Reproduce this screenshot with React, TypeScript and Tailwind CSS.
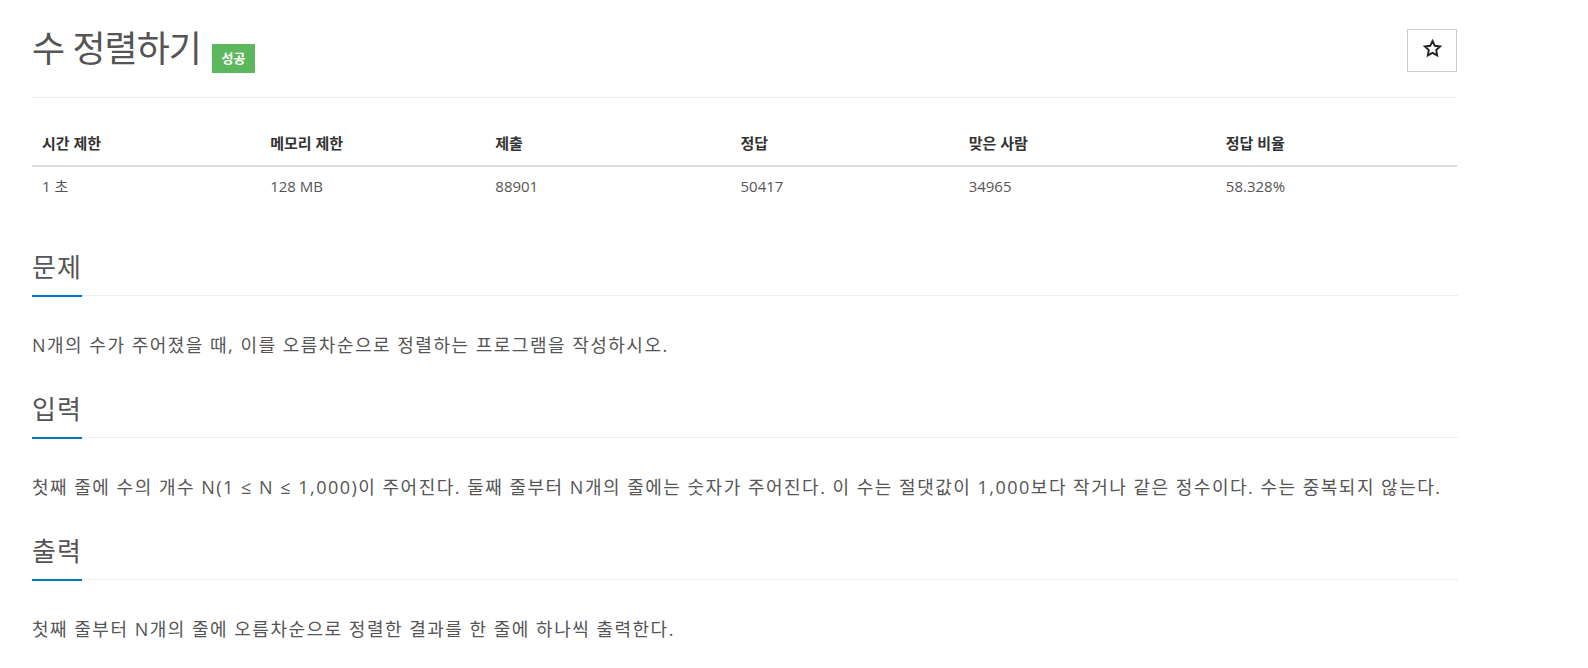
const font = { fontFamily: '"Open Sans", "Noto Sans CJK KR", sans-serif' };

const stats = [
  { label: '시간 제한', value: '1 초', w: 'w-[228px]' },
  { label: '메모리 제한', value: '128 MB', w: 'w-[225px]' },
  { label: '제출', value: '88901', w: 'w-[245px]' },
  { label: '정답', value: '50417', w: 'w-[228px]' },
  { label: '맞은 사람', value: '34965', w: 'w-[257px]' },
  { label: '정답 비율', value: '58.328%', w: 'w-[241px]' },
];

const sections = [
  { title: '문제', body: 'N개의 수가 주어졌을 때, 이를 오름차순으로 정렬하는 프로그램을 작성하시오.' },
  {
    title: '입력',
    body: '첫째 줄에 수의 개수 N(1 ≤ N ≤ 1,000)이 주어진다. 둘째 줄부터 N개의 줄에는 숫자가 주어진다. 이 수는 절댓값이 1,000보다 작거나 같은 정수이다. 수는 중복되지 않는다.',
  },
  { title: '출력', body: '첫째 줄부터 N개의 줄에 오름차순으로 정렬한 결과를 한 줄에 하나씩 출력한다.' },
];

const Section = ({ title, body }: { title: string; body: string }) => (
  <section className="mb-[32px]">
    <div className="flex items-end">
      <h2 className="text-[26px] leading-[36px] tracking-[1px] text-[#555] pb-[10px] border-b-2 border-[#0076c0] whitespace-nowrap">
        {title}
      </h2>
      <div className="flex-1 border-b border-dotted border-[#dcdcdc] mb-[1px]" />
    </div>
    <p className="mt-[34px] text-[18px] leading-[28px] tracking-[1.5px] text-[#555]">{body}</p>
  </section>
);

const StarIcon = () => (
  <svg width="19" height="19" viewBox="0 0 24 24" className="mb-[4px]">
    <polygon
      points="12,2.5 14.9,8.6 21.5,9.5 16.7,14.1 17.9,20.7 12,17.5 6.1,20.7 7.3,14.1 2.5,9.5 9.1,8.6"
      fill="none"
      stroke="#222"
      strokeWidth="2.4"
      strokeLinejoin="miter"
    />
  </svg>
);

export default function App() {
  return (
    <div className="bg-white min-h-[668px] pl-[32px]" style={font}>
      <div className="w-[1425px]">
        <div className="flex justify-between pt-[27px] pb-[24px] border-b border-[#eee]">
          <div className="flex items-start">
            <h1 className="text-[36px] leading-[44px] tracking-[-1px] text-[#555] font-normal">수 정렬하기</h1>
            <span className="ml-[11px] mt-[17px] w-[43px] h-[29px] flex items-center justify-center bg-[#5cb85c] text-white text-[13px] font-bold">
              성공
            </span>
          </div>
          <button className="mt-[2px] w-[50px] h-[43px] border border-[#ccc] bg-white flex items-center justify-center">
            <StarIcon />
          </button>
        </div>

        <table className="mt-[24px] w-full border-collapse text-[15px]">
          <thead>
            <tr className="border-b-2 border-[#ddd]">
              {stats.map((s) => (
                <th key={s.label} className={`${s.w} h-[44px] pl-[10px] text-left font-bold text-[#333]`}>
                  {s.label}
                </th>
              ))}
            </tr>
          </thead>
          <tbody>
            <tr>
              {stats.map((s) => (
                <td key={s.label} className="h-[40px] pl-[10px] text-left text-[#555]">
                  {s.value}
                </td>
              ))}
            </tr>
          </tbody>
        </table>

        <div className="mt-[43px]">
          {sections.map((s) => (
            <Section key={s.title} title={s.title} body={s.body} />
          ))}
        </div>
      </div>
    </div>
  );
}
